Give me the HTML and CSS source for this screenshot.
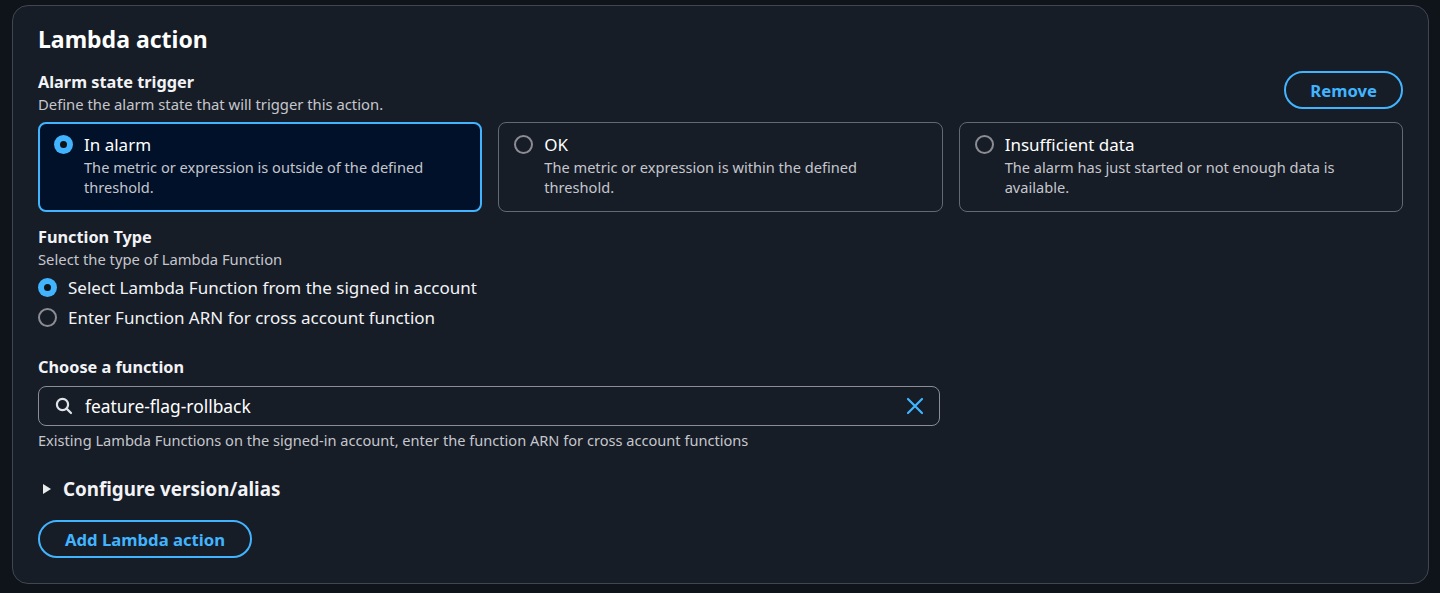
FILE: index.html
```html
<!DOCTYPE html>
<html lang="en">
<head>
<meta charset="utf-8">
<title>Lambda action</title>
<link rel="stylesheet" href="styles.css">
</head>
<body>
<section class="panel">
  <h2 class="title">Lambda action</h2>
  <div class="trigger-head">
    <div>
      <div class="label">Alarm state trigger</div>
      <div class="desc">Define the alarm state that will trigger this action.</div>
    </div>
    <button class="btn btn-remove">Remove</button>
  </div>
  <div class="cards">
    <div class="card selected">
      <span class="radio on"></span>
      <div class="card-text">
        <div class="card-title">In alarm</div>
        <div class="card-desc">The metric or expression is outside of the defined threshold.</div>
      </div>
    </div>
    <div class="card">
      <span class="radio"></span>
      <div class="card-text">
        <div class="card-title">OK</div>
        <div class="card-desc">The metric or expression is within the defined threshold.</div>
      </div>
    </div>
    <div class="card">
      <span class="radio"></span>
      <div class="card-text">
        <div class="card-title">Insufficient data</div>
        <div class="card-desc">The alarm has just started or not enough data is available.</div>
      </div>
    </div>
  </div>

  <div class="ftype">
    <div class="label">Function Type</div>
    <div class="desc">Select the type of Lambda Function</div>
    <div class="radio-list">
      <div class="radio-row"><span class="radio on"></span><span>Select Lambda Function from the signed in account</span></div>
      <div class="radio-row"><span class="radio"></span><span>Enter Function ARN for cross account function</span></div>
    </div>
  </div>

  <div class="choose">
    <div class="label">Choose a function</div>
    <div class="input">
      <svg class="ico-search" width="18" height="18" viewBox="0 0 18 18"><circle cx="7.5" cy="7.5" r="5.6" fill="none" stroke="#dfe3e8" stroke-width="2.2"/><path d="M11.6 11.6 L16 16" stroke="#dfe3e8" stroke-width="2.2" stroke-linecap="round"/></svg>
      <span class="input-value">feature-flag-rollback</span>
      <svg class="ico-clear" width="18" height="18" viewBox="0 0 18 18"><path d="M2 2 L16 16 M16 2 L2 16" stroke="#42b4ff" stroke-width="2.2" stroke-linecap="round"/></svg>
    </div>
    <div class="hint">Existing Lambda Functions on the signed-in account, enter the function ARN for cross account functions</div>
  </div>

  <div class="expand">
    <svg width="10" height="12" viewBox="0 0 10 12"><path d="M1 1 L9 6 L1 11 Z" fill="#e9ebed"/></svg>
    <span>Configure version/alias</span>
  </div>

  <button class="btn btn-add">Add Lambda action</button>
</section>
</body>
</html>
```

FILE: styles.css
```css
* { box-sizing: border-box; }
html, body { margin: 0; }
body {
  background: #0f141a;
  padding: 5px 11px 9px 12px;
  font-family: "Noto Sans", "Open Sans", sans-serif;
  color: #e9ebed;
}
.panel {
  background: #161d26;
  border: 1px solid #424650;
  border-radius: 16px;
  height: 579px;
  padding: 17px 25px 20px 25px;
}
.title {
  margin: 0;
  font-size: 23px;
  line-height: 32px;
  font-weight: 700;
  color: #ffffff;
}
.trigger-head {
  display: flex;
  justify-content: space-between;
  align-items: flex-start;
  margin-top: 16px;
}
.label {
  font-size: 16.3px;
  line-height: 22px;
  font-weight: 700;
  color: #f3f3f7;
}
.desc {
  font-size: 14.8px;
  line-height: 22px;
  color: #c6c6cd;
}
.btn {
  background: transparent;
  border: 2px solid #42b4ff;
  border-radius: 20px;
  color: #42b4ff;
  font-family: inherit;
  font-weight: 700;
  font-size: 16.7px;
  height: 38px;
  padding: 0 25px;
  cursor: pointer;
}
.btn-remove { padding: 0 24px; }
.cards {
  display: grid;
  grid-template-columns: repeat(3, 1fr);
  gap: 16px;
  margin-top: 7px;
}
.card {
  display: flex;
  gap: 11px;
  height: 90px;
  border: 1px solid #656871;
  border-radius: 8px;
  padding: 10px 15px 0 15px;
}
.card.selected {
  border: 2px solid #42b4ff;
  background: #001129;
  padding: 9px 14px 0 14px;
}
.radio {
  flex: none;
  width: 19px;
  height: 19px;
  border-radius: 50%;
  border: 2px solid #8c8c94;
  margin-top: 2px;
  position: relative;
}
.radio.on {
  border: none;
  background: #42b4ff;
}
.radio.on::after {
  content: "";
  position: absolute;
  left: 6px;
  top: 6px;
  width: 7px;
  height: 7px;
  border-radius: 50%;
  background: #0f141a;
}
.card-title {
  font-size: 17px;
  line-height: 24px;
  color: #ffffff;
}
.card-desc {
  font-size: 14.6px;
  line-height: 20px;
  color: #c6c6cd;
  max-width: 380px;
}
.ftype { margin-top: 14px; }
.radio-list { margin-top: 2px; }
.radio-row {
  display: flex;
  align-items: center;
  gap: 11px;
  height: 30px;
  font-size: 17px;
  color: #f3f3f7;
}
.radio-row .radio { margin-top: 0; }
.choose { margin-top: 24px; }
.input {
  margin-top: 8px;
  width: 902px;
  height: 40px;
  border: 1px solid #8c8c94;
  border-radius: 8px;
  display: flex;
  align-items: center;
  padding: 0 15px 0 16px;
}
.ico-search { flex: none; }
.input-value {
  flex: 1;
  margin-left: 12px;
  font-size: 17.4px;
  color: #ffffff;
}
.ico-clear { flex: none; }
.hint {
  margin-top: 4px;
  font-size: 14.6px;
  line-height: 20px;
  color: #c6c6cd;
}
.expand {
  display: flex;
  align-items: center;
  gap: 11px;
  margin-top: 26px;
  padding-left: 4px;
  font-size: 18.8px;
  font-weight: 700;
  color: #f3f3f7;
  height: 26px;
}
.btn-add {
  margin-top: 18px;
  padding: 0 25px;
}
```
